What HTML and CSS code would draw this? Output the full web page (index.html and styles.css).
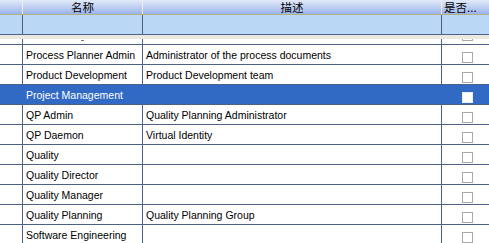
FILE: index.html
```html
<!DOCTYPE html>
<html>
<head>
<meta charset="utf-8">
<link rel="stylesheet" href="styles.css">
</head>
<body>
<div class="grid">
  <div class="hdr">
    <div class="c c0"></div>
    <div class="c c1 center">名称</div>
    <div class="c c2 center">描述</div>
    <div class="c c3">是否...</div>
  </div>
  <div class="filter">
    <div class="c c0"></div>
    <div class="c c1"></div>
    <div class="c c2"></div>
    <div class="c c3"></div>
  </div>
  <div class="strip"></div>
  <div class="rows">
    <div class="row partial">
      <div class="c c0"></div>
      <div class="c c1"><span class="tail"></span></div>
      <div class="c c2"></div>
      <div class="c c3"><span class="cb"></span></div>
    </div>
    <div class="row">
      <div class="c c0"></div>
      <div class="c c1">Process Planner Admin</div>
      <div class="c c2">Administrator of the process documents</div>
      <div class="c c3"><span class="cb"></span></div>
    </div>
    <div class="row">
      <div class="c c0"></div>
      <div class="c c1">Product Development</div>
      <div class="c c2">Product Development team</div>
      <div class="c c3"><span class="cb"></span></div>
    </div>
    <div class="row sel">
      <div class="c c0"></div>
      <div class="c c1">Project Management</div>
      <div class="c c2"></div>
      <div class="c c3"><span class="cb"></span></div>
    </div>
    <div class="row">
      <div class="c c0"></div>
      <div class="c c1">QP Admin</div>
      <div class="c c2">Quality Planning Administrator</div>
      <div class="c c3"><span class="cb"></span></div>
    </div>
    <div class="row">
      <div class="c c0"></div>
      <div class="c c1">QP Daemon</div>
      <div class="c c2">Virtual Identity</div>
      <div class="c c3"><span class="cb"></span></div>
    </div>
    <div class="row">
      <div class="c c0"></div>
      <div class="c c1">Quality</div>
      <div class="c c2"></div>
      <div class="c c3"><span class="cb"></span></div>
    </div>
    <div class="row">
      <div class="c c0"></div>
      <div class="c c1">Quality Director</div>
      <div class="c c2"></div>
      <div class="c c3"><span class="cb"></span></div>
    </div>
    <div class="row">
      <div class="c c0"></div>
      <div class="c c1">Quality Manager</div>
      <div class="c c2"></div>
      <div class="c c3"><span class="cb"></span></div>
    </div>
    <div class="row">
      <div class="c c0"></div>
      <div class="c c1">Quality Planning</div>
      <div class="c c2">Quality Planning Group</div>
      <div class="c c3"><span class="cb"></span></div>
    </div>
    <div class="row">
      <div class="c c0"></div>
      <div class="c c1">Software Engineering</div>
      <div class="c c2"></div>
      <div class="c c3"><span class="cb"></span></div>
    </div>
  </div>
</div>
</body>
</html>
```
FILE: styles.css
```css
html, body {
  margin: 0;
  padding: 0;
  background: #ffffff;
}
.grid {
  width: 489px;
  height: 243px;
  overflow: hidden;
  font-family: "Liberation Sans", "Noto Sans CJK SC", sans-serif;
  font-size: 10.5px;
  color: #000;
}
.hdr, .filter, .row {
  display: flex;
}
.c {
  box-sizing: border-box;
  flex: none;
  white-space: nowrap;
}
.c0 { width: 23px; }
.c1 { width: 120px; }
.c2 { width: 299px; }
.c3 { flex: 1 1 auto; }
.hdr {
  height: 15px;
  background: linear-gradient(#e2eaf9, #c0d0f2 50%, #9bb3ea);
  border-bottom: 1px solid #b3b383;
  box-sizing: border-box;
  font-family: "Noto Sans CJK SC", sans-serif;
  font-size: 11.5px;
  line-height: 14px;
}
.hdr .c0, .hdr .c1, .hdr .c2 {
  border-right: 1px solid #eef0e6;
}
.hdr .c3 { padding-left: 2px; }
.center { text-align: center; }
.filter {
  height: 20px;
  box-sizing: border-box;
  background: #bbd7f6;
  border-bottom: 1px solid #4c6184;
}
.filter .c0, .filter .c1, .filter .c2 {
  border-right: 1px solid #4c6184;
}
.strip {
  height: 4px;
  background: #ebe9e1;
}
.row {
  height: 20px;
  box-sizing: border-box;
  border-bottom: 1px solid #4c6184;
}
.row .c1, .row .c2 {
  padding: 2px 0 0 3px;
  line-height: 17px;
}
.row.partial {
  height: 6px;
}
.row .c0, .row .c1, .row .c2 {
  border-right: 1px solid #4c6184;
}
.row .c3 {
  display: flex;
  justify-content: center;
  align-items: flex-end;
  padding: 0 0 1px 3px;
}
.row.partial .c3 {
  align-items: flex-start;
  padding-bottom: 0;
}
.row.partial .cb {
  height: 2px;
  border-top: none;
}
.tail {
  display: block;
  width: 3px;
  height: 1px;
  margin: -1px 0 0 55px;
  background: #777;
}
.cb {
  width: 11px;
  height: 11px;
  box-sizing: border-box;
  border: 1px solid #a9a9a9;
  background: #fff;
}
.row.sel {
  background: #316ac5;
  color: #fff;
}
.row.sel .c0, .row.sel .c1, .row.sel .c2 {
  border-right-color: #316ac5;
}
.row.sel .cb {
  border-color: #e8eef8;
}
```
